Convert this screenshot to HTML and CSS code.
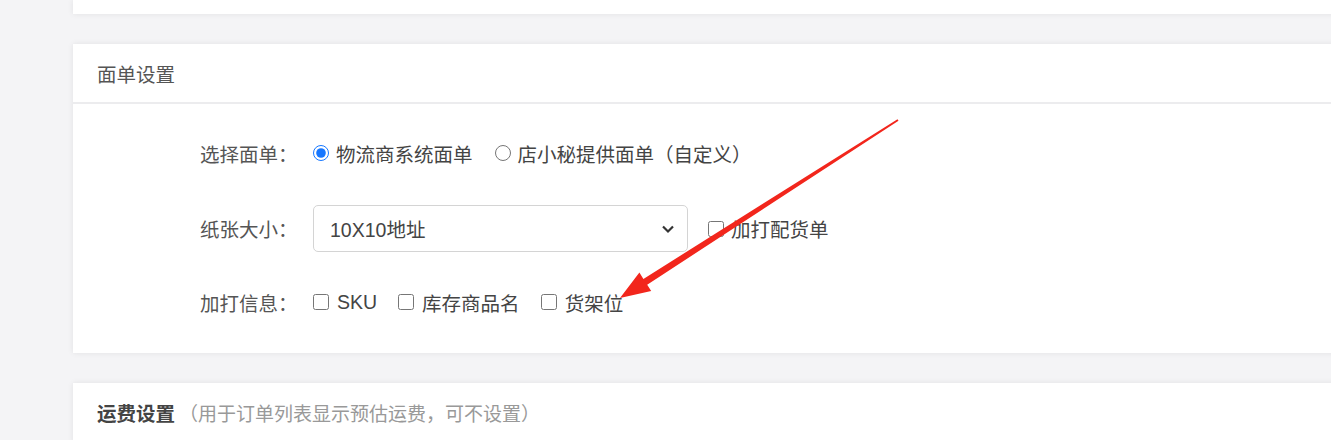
FILE: index.html
```html
<!DOCTYPE html>
<html lang="zh-CN">

<head>
    <meta charset="UTF-8">
    <title>面单设置</title>
    <link rel="stylesheet" href="styles.css">
</head>

<body>
    <div class="page">
        <div class="card card-top"></div>

        <div class="card">
            <div class="card-header">面单设置</div>
            <div class="card-body">
                <div class="form-row row-1">
                    <span class="form-label">选择面单：</span>
                    <label class="opt"><input type="radio" name="tpl" checked> 物流商系统面单</label>
                    <label class="opt"><input type="radio" name="tpl"> 店小秘提供面单（自定义）</label>
                </div>
                <div class="form-row row-2">
                    <span class="form-label">纸张大小：</span>
                    <div class="select">
                        <span>10X10地址</span>
                        <svg width="14" height="10" viewBox="0 0 14 10"><path d="M2 2.5 L7 7.5 L12 2.5" fill="none" stroke="#333" stroke-width="2.2"/></svg>
                    </div>
                    <label class="opt opt-pick"><input type="checkbox"> 加打配货单</label>
                </div>
                <div class="form-row row-3">
                    <span class="form-label">加打信息：</span>
                    <label class="opt"><input type="checkbox"> SKU</label>
                    <label class="opt"><input type="checkbox"> 库存商品名</label>
                    <label class="opt"><input type="checkbox"> 货架位</label>
                </div>
            </div>
            <!-- 红色标注箭头 -->
            <svg class="arrow" width="1331" height="440" viewBox="0 0 1331 440">
                <polygon fill="#f2261c" points="897.5,119.2 643.4,278.9 639.4,272.5 620,298 651.2,291.1 647.2,284.7 898.5,120.8"/>
            </svg>
        </div>

        <div class="card">
            <div class="card-header">
                <b>运费设置</b><span class="sub">（用于订单列表显示预估运费，可不设置）</span>
            </div>
        </div>
    </div>
</body>

</html>
```

FILE: styles.css
```css
body {
    margin: 0;
    background: #f4f4f6;
    font-family: "Liberation Sans", "Noto Sans CJK SC", sans-serif;
    color: #444;
    overflow: hidden;
}

.page {
    padding-left: 73px;
    display: flex;
    flex-direction: column;
    gap: 30px;
}

.card {
    background: #fff;
    width: calc(100% + 20px);
    box-shadow: 0 0 6px rgba(0, 0, 0, 0.08);
    position: relative;
}

.card-top {
    height: 14px;
}

.card-header {
    height: 58px;
    border-bottom: 2px solid #ececee;
    padding-left: 24px;
    display: flex;
    align-items: center;
    font-size: 19.5px;
    color: #555;
}

.card-header b {
    color: #444;
}

.card-header .sub {
    color: #999;
    font-size: 19px;
    margin-left: 4px;
}

.card-body {
    padding: 35px 0 37px 127px;
}

.form-row {
    display: flex;
    align-items: center;
    font-size: 19.5px;
}

.row-1 {
    height: 28px;
    margin-bottom: 38px;
}

.row-2 {
    height: 47px;
    margin-bottom: 36px;
}

.row-3 {
    height: 28px;
    margin-top: 2px;
}

.form-label {
    width: 113px;
    color: #555;
}

.opt {
    display: flex;
    align-items: center;
    margin-right: 20px;
    color: #444;
}

.opt input {
    margin: 0 7px 0 0;
    width: 16px;
    height: 16px;
    accent-color: #1677ff;
}

.row-1 .opt {
    margin-right: 22px;
}

.row-3 .opt {
    margin-right: 21px;
}

.row-3 .opt input {
    margin-right: 8px;
}

.select {
    box-sizing: border-box;
    width: 375px;
    height: 47px;
    border: 1px solid #d4d4d4;
    border-radius: 5px;
    display: flex;
    align-items: center;
    justify-content: space-between;
    padding: 0 12px 0 16px;
    margin-right: 20px;
}

.arrow {
    position: absolute;
    left: -73px;
    top: -44px;
    pointer-events: none;
}
```
